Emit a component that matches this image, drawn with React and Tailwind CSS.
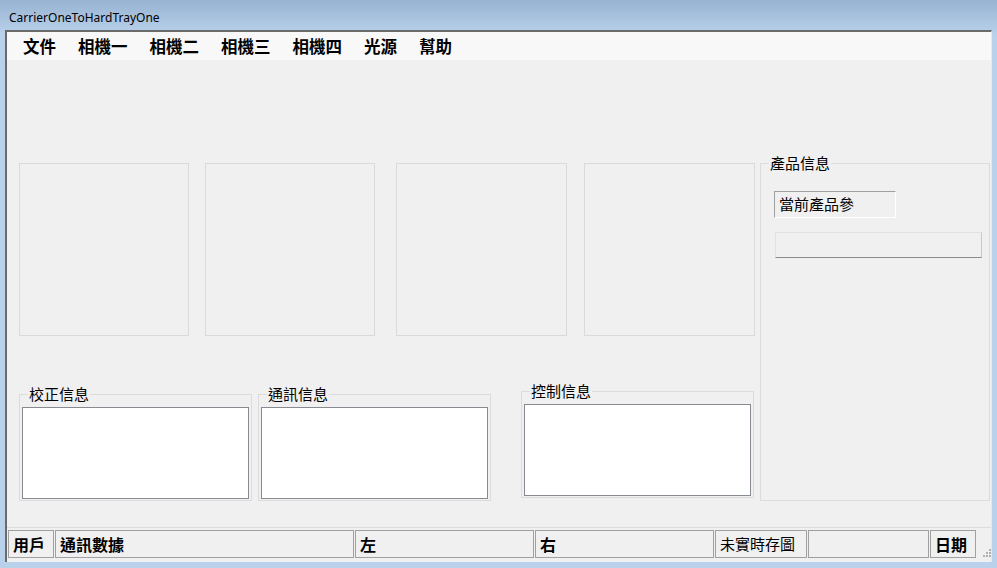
import React from "react";

const cjk = { fontFamily: '"Noto Sans CJK TC", "Noto Sans CJK SC", sans-serif' };

const menus = ["文件", "相機一", "相機二", "相機三", "相機四", "光源", "幫助"];

// group box like a WinForms GroupBox
const GroupBox = ({ title, className, legend = "ml-[6px]", children }) => (
  <fieldset className={`border border-[#dcdcdc] ${className}`}>
    <legend className={`${legend} px-[1px] text-[15px] leading-[18px] text-black`} style={cjk}>
      {title}
    </legend>
    {children}
  </fieldset>
);

const Panel = ({ w, bold, children }) => (
  <div
    className={`h-[28px] border border-[#a0a0a0] flex items-center pl-[4px] text-black ${
      bold ? "font-bold text-[16px]" : "text-[15px]"
    } ${w}`}
    style={cjk}
  >
    {children}
  </div>
);

export default function App() {
  return (
    <div className="w-[997px] h-[568px] overflow-hidden bg-gradient-to-b from-[#97b3d2] from-0% to-[#b9d1ea] to-[6%] flex flex-col">
      {/* title bar */}
      <div
        className="h-[30px] pl-[9px] pt-[10px] text-[12px] leading-[16px] text-black"
        style={{ fontFamily: '"Noto Sans", "Open Sans", sans-serif' }}
      >
        CarrierOneToHardTrayOne
      </div>

      {/* client area */}
      <div className="ml-[5px] w-[987px] h-[532px] border-l-2 border-t-2 border-[#6a6a6a] border-r border-r-[#e8e8e8] bg-[#f0f0f0] flex flex-col">
        {/* menu bar */}
        <div className="h-[28px] bg-[#f8f8f8] flex items-center pl-[16px] gap-[22px]">
          {menus.map((m) => (
            <span key={m} className="text-[16.5px] font-bold text-black leading-[20px]" style={cjk}>
              {m}
            </span>
          ))}
        </div>

        {/* main content */}
        <div className="flex-1 flex">
          <div className="w-[753px] shrink-0 flex flex-col pl-[12px] pt-[103px]">
            <div className="flex">
              <div className="w-[170px] h-[173px] border border-[#dadada]" />
              <div className="ml-[16px] w-[170px] h-[173px] border border-[#dadada]" />
              <div className="ml-[21px] w-[171px] h-[173px] border border-[#dadada]" />
              <div className="ml-[17px] w-[171px] h-[173px] border border-[#dadada]" />
            </div>
            <div className="flex items-start mt-[46px]">
              <GroupBox title="校正信息" className="w-[233px] h-[116px] mt-[3px] px-[2px]">
                <div className="mt-[4px] w-[227px] h-[92px] bg-white border border-[#878a91]" />
              </GroupBox>
              <GroupBox title="通訊信息" className="ml-[6px] w-[233px] h-[116px] mt-[3px] px-[2px]">
                <div className="mt-[4px] w-[227px] h-[92px] bg-white border border-[#878a91]" />
              </GroupBox>
              <GroupBox title="控制信息" className="ml-[30px] w-[233px] h-[116px] px-[2px]">
                <div className="mt-[4px] w-[227px] h-[92px] bg-white border border-[#878a91]" />
              </GroupBox>
            </div>
          </div>

          <div className="pt-[94px]">
            <GroupBox title="產品信息" legend="ml-[8px]" className="w-[230px] h-[347px]">
              <div
                className="ml-[13px] mt-[19px] w-[122px] h-[27px] border-t border-l border-[#a0a0a0] border-b border-r border-b-white border-r-white pl-[4px] text-[15px] leading-[24px] text-black"
                style={cjk}
              >
                當前產品參
              </div>
              <div className="ml-[14px] mt-[14px] w-[207px] h-[26px] border border-t-[#e2e2e2] border-l-[#e2e2e2] border-b-[#8c8c8c] border-r-[#c8c8c8] bg-[#f0f0f0]" />
            </GroupBox>
          </div>
        </div>

        {/* status bar */}
        <div className="h-[35px] border-t border-[#dcdcdc] flex items-start pt-[2px] pl-[1px] gap-[1px]">
          <Panel w="w-[46px]" bold>用戶</Panel>
          <Panel w="w-[299px]" bold>通訊數據</Panel>
          <Panel w="w-[179px]" bold>左</Panel>
          <Panel w="w-[179px]" bold>右</Panel>
          <Panel w="w-[92px]">未實時存圖</Panel>
          <Panel w="w-[121px]" />
          <Panel w="w-[46px]" bold>日期</Panel>
          <div className="w-[14px] h-[28px] flex items-end justify-end">
            <svg width="10" height="10" viewBox="0 0 10 10">
              {[[8, 0], [8, 3], [5, 3], [8, 6], [5, 6], [2, 6]].map(([x, y], i) => (
                <rect key={i} x={x} y={y + 1} width="2" height="2" fill="#b0b0b0" />
              ))}
            </svg>
          </div>
        </div>
      </div>
    </div>
  );
}
